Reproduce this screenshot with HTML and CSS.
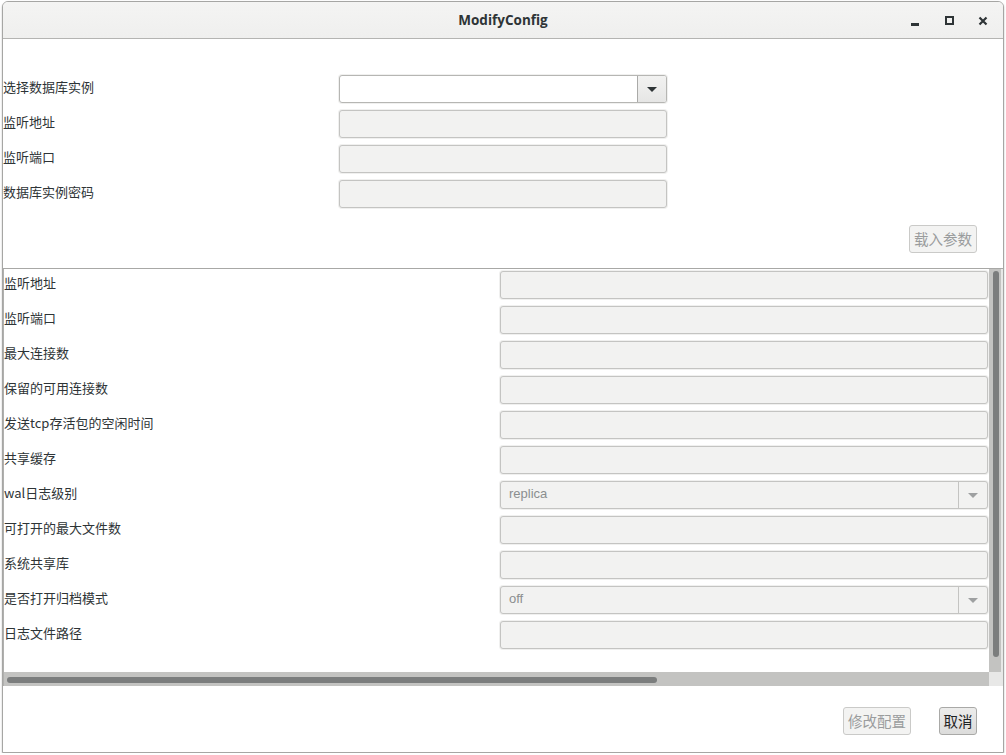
FILE: index.html
```html
<!DOCTYPE html>
<html>
<head>
<meta charset="utf-8">
<link rel="stylesheet" href="styles.css">
</head>
<body>
<div class="window">
  <div class="titlebar">
    <div class="title">ModifyConfig</div>
    <div class="wm">
      <span class="wm-btn"><span class="i-min"></span></span>
      <span class="wm-btn"><span class="i-max"></span></span>
      <span class="wm-btn">
        <svg width="10" height="10" viewBox="0 0 10 10"><path d="M1.5 1.5 L8.5 8.5 M8.5 1.5 L1.5 8.5" stroke="#2e3436" stroke-width="2.2"/></svg>
      </span>
    </div>
  </div>

  <div class="top">
    <div class="form-top">
      <label>选择数据库实例</label>
      <div class="combo active"><div class="combo-text"></div><div class="combo-btn"><span class="arrow"></span></div></div>
      <label>监听地址</label>
      <div class="field"></div>
      <label>监听端口</label>
      <div class="field"></div>
      <label>数据库实例密码</label>
      <div class="field"></div>
    </div>
    <div class="actions-top">
      <button class="btn disabled">载入参数</button>
    </div>
  </div>

  <div class="pane">
    <div class="pane-main">
      <div class="pane-view">
        <div class="form-list">
          <label>监听地址</label><div class="field"></div>
          <label>监听端口</label><div class="field"></div>
          <label>最大连接数</label><div class="field"></div>
          <label>保留的可用连接数</label><div class="field"></div>
          <label>发送tcp存活包的空闲时间</label><div class="field"></div>
          <label>共享缓存</label><div class="field"></div>
          <label>wal日志级别</label>
          <div class="combo"><div class="combo-text">replica</div><div class="combo-btn"><span class="arrow"></span></div></div>
          <label>可打开的最大文件数</label><div class="field"></div>
          <label>系统共享库</label><div class="field"></div>
          <label>是否打开归档模式</label>
          <div class="combo"><div class="combo-text">off</div><div class="combo-btn"><span class="arrow"></span></div></div>
          <label>日志文件路径</label><div class="field"></div>
        </div>
      </div>
      <div class="vscroll"><div class="vthumb"></div></div>
    </div>
    <div class="hrow">
      <div class="hscroll"><div class="hthumb"></div></div>
      <div class="corner"></div>
    </div>
  </div>

  <div class="footer">
    <button class="btn disabled">修改配置</button>
    <button class="btn primary">取消</button>
  </div>
</div>
</body>
</html>
```

FILE: styles.css
```css
* { box-sizing: border-box; }
html, body { margin: 0; padding: 0; background: #ffffff; }
body { padding: 1px 2px 0 2px; font-family: "Noto Sans CJK SC", "Noto Sans", sans-serif; font-size: 13px; color: #2e3436; }

.window {
  width: 1002px;
  height: 752px;
  border: 1px solid #a6a6a4;
  border-radius: 6px 6px 0 0;
  background: #ffffff;
  display: flex;
  flex-direction: column;
  overflow: hidden;
  box-shadow: 0 1px 2px rgba(0,0,0,0.25);
}

.titlebar {
  height: 37px;
  flex: none;
  background: linear-gradient(#f4f4f3, #efefee);
  border-bottom: 1px solid #b4b4b2;
  display: flex;
  align-items: center;
  justify-content: center;
  position: relative;
}
.title {
  font-family: "Open Sans", "Liberation Sans", sans-serif;
  font-weight: 700;
  font-size: 13.5px;
  color: #2e3436;
}
.wm {
  position: absolute;
  right: 3px;
  top: 0;
  height: 37px;
  display: flex;
  align-items: center;
}
.wm-btn { width: 34px; height: 20px; display: flex; align-items: center; justify-content: center; }
.i-min { width: 8px; height: 3px; background: #2e3436; margin-top: 8px; }
.i-max { width: 9px; height: 9px; border: 2px solid #2e3436; }

.top { flex: none; height: 229px; padding: 36px 0 0 0; }
.form-top {
  display: grid;
  grid-template-columns: 336px 328px;
  grid-auto-rows: 28px;
  row-gap: 7px;
  align-items: center;
}
.form-top label { line-height: 24px; margin-bottom: 4px; }

.actions-top { display: flex; justify-content: flex-end; padding-right: 26px; margin-top: 17px; }

label { white-space: nowrap; color: #2e3436; }

.field {
  height: 28px;
  background: #f2f2f1;
  border: 1px solid #c4c4c2;
  border-radius: 3px;
  box-shadow: 0 0 0 1px #f0f0ef;
}

.combo {
  height: 28px;
  display: flex;
  border: 1px solid #c4c4c2;
  border-radius: 3px;
  background: #f2f2f1;
  box-shadow: 0 0 0 1px #f0f0ef;
  overflow: hidden;
}
.combo-text {
  flex: 1;
  padding-left: 8px;
  line-height: 24px;
  font-family: "Liberation Sans", "Noto Sans", sans-serif;
  font-size: 13px;
  color: #8b8e8f;
}
.combo-btn {
  width: 29px;
  border-left: 1px solid #c4c4c2;
  display: flex;
  align-items: center;
  justify-content: center;
}
.arrow {
  width: 0; height: 0;
  border-left: 5px solid transparent;
  border-right: 5px solid transparent;
  border-top: 5px solid #9ea0a1;
  margin-top: 1px;
}
.combo.active { background: #ffffff; border-color: #b6b6b3; }
.combo.active .combo-btn { background: linear-gradient(#f2f2f1, #e6e6e5); border-left-color: #aaaaa8; }
.combo.active .arrow { border-top-color: #2e3436; }

.btn {
  font-family: "Noto Sans CJK SC", sans-serif;
  font-size: 14.5px;
  height: 28px;
  padding: 0 4px;
  border-radius: 3px;
  line-height: 24px;
}
.btn.disabled {
  color: #9a9c9d;
  background: #f3f3f2;
  border: 1px solid #cacac8;
}
.btn.primary {
  color: #1e2224;
  background: linear-gradient(#ececeb, #dcdcdb);
  border: 1px solid #a9a9a7;
  padding: 0 2px;
  width: 38px;
}

.pane {
  flex: none;
  height: 418px;
  border-top: 1px solid #a8a8a6;
  display: flex;
  flex-direction: column;
}
.pane-main { flex: 1; display: flex; min-height: 0; }
.pane-view {
  flex: 1;
  border-left: 1px solid #b0b0ae;
  overflow: hidden;
  padding-top: 2px;
}
.form-list {
  display: grid;
  grid-template-columns: 496px 488px;
  grid-auto-rows: 28px;
  row-gap: 7px;
  align-items: center;
}
.form-list label { line-height: 24px; margin-bottom: 4px; }

.vscroll {
  width: 14px;
  flex: none;
  background: #c3c3c1;
  padding: 2px 0 0 4px;
  border-right: 2px solid #e8e8e7;
}
.vthumb { width: 6px; height: 386px; border-radius: 3px; background: #7b7d7d; }

.hrow { height: 14px; flex: none; display: flex; }
.hscroll { flex: 1; background: #c3c3c1; padding: 5px 0 0 3px; border-left: 1px solid #b0b0ae; }
.hthumb { width: 650px; height: 6px; border-radius: 3px; background: #7b7d7d; }
.corner { width: 14px; background: #e8e8e7; }

.footer {
  flex: 1;
  display: flex;
  justify-content: flex-end;
  align-items: flex-start;
  padding: 21px 26px 0 0;
  gap: 28px;
}
```
